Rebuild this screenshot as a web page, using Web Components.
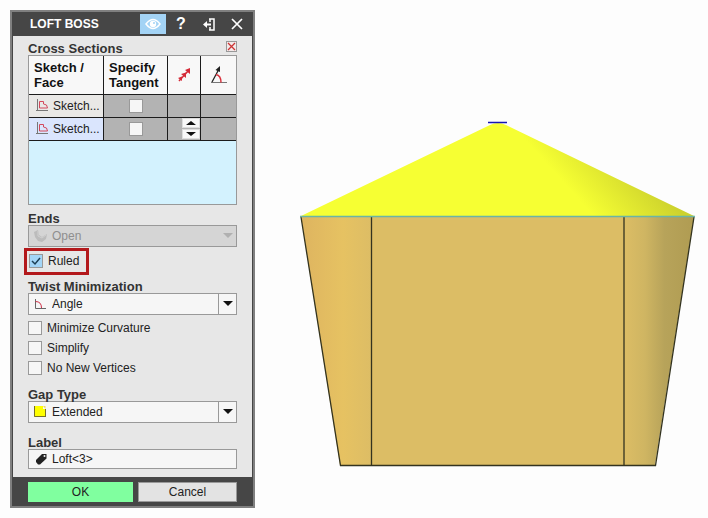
<!DOCTYPE html>
<html lang="en">
<head>
<meta charset="utf-8">
<title>Loft Boss</title>
<style>
body{margin:0;padding:10px;background:#fdfdfd;color:#222;font:12px/16px "Liberation Sans",Arial,sans-serif;display:grid;grid-template-columns:minmax(0,245fr) minmax(0,398fr);gap:45px;align-items:start}
</style>
</head>
<body>
<loft-panel heading="LOFT BOSS">
  <section-table></section-table>
  <select-field class="ends" label="Ends" value="Open" disabled>
    <svg slot="icon" width="16" height="14" viewBox="0 0 16 14"><path d="M1 3l4-2 1 5 3 2 5-3-1 5-4 3-4-1-3-4z" fill="#bcbcbc"/><path d="M5 2v5l4 2 4-3" fill="none" stroke="#d0d0d0"/></svg>
  </select-field>
  <check-field label="Ruled" checked highlight></check-field>
  <select-field class="twist" label="Twist Minimization" value="Angle">
    <svg slot="icon" width="16" height="14" viewBox="0 0 16 14"><path d="M2.500 2v9.500H13" fill="none" stroke="#666"/><path d="M2.500 4.500q6 0 6 6.500" fill="none" stroke="#cf3048"/></svg>
  </select-field>
  <div class="checks">
    <check-field label="Minimize Curvature"></check-field>
    <check-field label="Simplify"></check-field>
    <check-field label="No New Vertices"></check-field>
  </div>
  <select-field class="gap" label="Gap Type" value="Extended">
    <svg slot="icon" width="16" height="14" viewBox="0 0 16 14"><path d="M1 1h9v3h3v8H1z" fill="#ff0"/><path d="M10 1h2.500v3" fill="#f2dc60"/><path d="M1.500 1v10.500H13M12.500 4v8" fill="none" stroke="#77702a"/></svg>
  </select-field>
  <text-field label="Label" value="Loft&lt;3&gt;">
    <svg slot="icon" width="16" height="14" viewBox="0 0 16 14"><path d="M3 8l6-6h4.500v4.500l-6.500 6H5L3 10z" fill="#222"/><circle cx="11.500" cy="4" r="1" fill="#f5f5f5"/></svg>
  </text-field>
  <panel-button slot="actions" kind="ok">OK</panel-button>
  <panel-button slot="actions">Cancel</panel-button>
</loft-panel>
<model-view></model-view>

<script>
const base = `*{box-sizing:border-box}:host{display:block}button,input,select{font:inherit;color:inherit;margin:0}svg{display:block}`;
const define = (name, render) => customElements.define(name, class extends HTMLElement {
  connectedCallback() {
    if (this.shadowRoot) return;
    this.attachShadow({mode: "open"}).innerHTML = render(this);
  }
});
const esc = s => s.replace(/&/g, "&amp;").replace(/</g, "&lt;").replace(/>/g, "&gt;");

define("loft-panel", el => `
<style>${base}
:host{border:2px solid #808080;background:#464646;padding:0 1px}
header{display:flex;align-items:center;height:24px;padding:0 1px 0 17px;color:#fff}
h1{font-size:12px;line-height:16px;margin:0;flex:1}
header button{width:28px;height:20px;padding:0;border:0;background:none;display:grid;place-items:center;font-weight:bold;font-size:16px}
header button.on{background:#a3d3f5;width:26px;margin-right:1px}
.body{background:#e7e7e7;padding:5px 15px 8px}
footer{display:grid;grid-template-columns:105fr 99fr;gap:5px;padding:5px 15px 4px}
::slotted(.ends){margin-top:7px}
::slotted(.twist){margin-top:5px}
::slotted(.checks){display:grid;gap:4px;padding:5px 0 12px}
::slotted(.gap){margin-bottom:13px}
</style>
<header><h1>${el.getAttribute("heading")}</h1>
<button class="on" aria-label="Preview"><svg width="16" height="12" viewBox="0 0 16 12"><path d="M1 6q7-9 14 0-7 9-14 0z" fill="none" stroke="#fff" stroke-width="1.500"/><circle cx="8" cy="6" r="3.200" fill="#fff"/><circle cx="9" cy="5" r="1" fill="#a3d3f5"/></svg></button>
<button aria-label="Help">?</button>
<button aria-label="Dock"><svg width="13" height="13" viewBox="0 0 13 13"><path d="M6 1h5v11H6M7 1v3M7 9v3" fill="none" stroke="#fff" stroke-width="1.500"/><path d="M2 6.500h6" stroke="#fff" stroke-width="2"/><path d="M0 6.500L4 3v7z" fill="#fff"/></svg></button>
<button aria-label="Close"><svg width="12" height="12" viewBox="0 0 12 12"><path d="M1 1l10 10M11 1L1 11" stroke="#fff" stroke-width="1.700"/></svg></button>
</header>
<div class="body"><slot></slot></div>
<footer><slot name="actions"></slot></footer>`);

const sketch = `<svg width="13" height="13" viewBox="0 0 13 13"><path d="M1.500 0v12M0 11.500h12" stroke="#777" fill="none"/><path d="M3.500 9V2.500h4V5q4 0 4 4z" stroke="#d3485c" fill="none"/></svg>`;
const row = (i, extra) => `<tr class="r${i}"><td><span>${sketch}Sketch...</span></td><td><input type="checkbox" aria-label="Specify tangent ${i}"></td><td>${extra}</td><td></td></tr>`;
define("section-table", () => `
<style>${base}
.top{display:flex;justify-content:space-between;align-items:start;height:14px}
h2{font-size:13px;line-height:15px;margin:0;color:#333}
.top button{width:11px;height:11px;padding:0;border:1px solid #999;background:#f3eaea;display:grid;place-items:center}
.box{border:1px solid #999;background:#d3f2fe;padding-bottom:63px}
table{width:100%;border-collapse:collapse;table-layout:fixed}
th,td{padding:0;border-right:1px solid #1c1c1c;border-bottom:1px solid #1c1c1c}
th:last-child,td:last-child{border-right:0}
th{height:38px;background:#f8f8f8;color:#111;font-size:13px;line-height:15px;text-align:left;padding-left:5px}
th.i{padding:0}th svg{margin:auto}
td{height:23px;background:#b3b3b3}
td:first-child{background:#e9e8e6}.r2 td:first-child{background:#dae5fd}
span{display:flex;align-items:center;gap:4px;padding-left:7px;white-space:nowrap}
input{appearance:none;display:block;width:14px;height:14px;margin:auto;border:1px solid #999;background:#f6f6f6}
.spin{display:grid;gap:1px;width:18px;margin-left:auto}
.spin button{height:10px;padding:0;border:1px solid #ddd;background:#f8f8f8;display:grid;place-items:center}
</style>
<div class="top"><h2>Cross Sections</h2><button aria-label="Clear"><svg width="9" height="9" viewBox="0 0 9 9"><path d="M1 1l7 7M8 1L1 8" stroke="#c33" stroke-width="1.300"/></svg></button></div>
<div class="box"><table>
<colgroup><col style="width:36%"><col style="width:31%"><col style="width:16%"><col></colgroup>
<thead><tr><th>Sketch / Face</th><th>Specify Tangent</th>
<th class="i" aria-label="Direction"><svg width="14" height="16" viewBox="0 0 14 16"><path d="M2 14L12 3" stroke="#d52b38" stroke-width="1.500"/><path d="M13 1v6L8 3zM9 5.500v5.500L4 7zM5 9.500V14L1 11z" fill="#d52b38"/></svg></th>
<th class="i" aria-label="Angle"><svg width="18" height="20" viewBox="0 0 18 20"><path d="M1 17.500h16" stroke="#777"/><path d="M2 17L9 4" stroke="#222" stroke-width="1.300"/><path d="M10 1v6L5.500 5z" fill="#222"/><path d="M6 9.500q5 1 5 8" stroke="#d9303c" fill="none" stroke-width="1.500"/></svg></th></tr></thead>
<tbody>${row(1, "")}${row(2, `<div class="spin"><button aria-label="Up"><svg width="10" height="4" viewBox="0 0 10 4"><path d="M0 4l5-4 5 4z" fill="#111"/></svg></button><button aria-label="Down"><svg width="10" height="4" viewBox="0 0 10 4"><path d="M0 0l5 4 5-4z" fill="#111"/></svg></button></div>`)}</tbody></table></div>`);

const field = `
label{display:block;font-weight:bold;font-size:13px;line-height:13px;height:13px;color:#333}
.box{display:grid;grid-template-columns:23px minmax(0,1fr) 18px;align-items:center;border:1px solid #999;background:#f6f6f6}
::slotted(svg),.arrow{grid-row:1;pointer-events:none;z-index:1}
::slotted(svg){display:block;grid-column:1;margin-left:4px}
select,input{grid-area:1/1/2/4;appearance:none;width:100%;padding:0 20px 0 23px;border:0;border-radius:0;background:none;outline:0}`;
define("select-field", el => {
  const off = el.hasAttribute("disabled"), v = esc(el.getAttribute("value"));
  return `
<style>${base}${field}
select{height:20px}
.arrow{grid-column:3;height:20px;border-left:1px solid #999;display:grid;place-items:center;color:#111}
.off{background:#d5d5d5}.off select{color:#8f8f8f;opacity:1}.off .arrow{border-color:transparent;color:#b0b0b0}
</style>
<label for="s">${el.getAttribute("label")}</label>
<div class="box ${off ? "off" : ""}"><slot name="icon"></slot><select id="s" ${off ? "disabled" : ""}><option>${v}</option></select>
<div class="arrow"><svg width="10" height="5" viewBox="0 0 10 5"><path d="M0 0h10L5 5z" fill="currentColor"/></svg></div></div>`;
});
define("text-field", el => `
<style>${base}${field}input{height:18px}</style>
<label for="t">${el.getAttribute("label")}</label>
<div class="box"><slot name="icon"></slot><input id="t" type="text" value="${esc(el.getAttribute("value"))}"></div>`);
define("check-field", el => `
<style>${base}
label{display:flex;align-items:center;gap:5px;line-height:16px}
:host([highlight]) label{width:max-content;border:3px solid #b3191c;margin:1px 0 0 -4px;padding:2px 7px 2px 2px;line-height:17px}
input{appearance:none;display:block;width:14px;height:14px;border:1px solid #999;background:#f6f6f6}
.wrap{display:grid}.wrap>*{grid-area:1/1}
.wrap svg{display:none;pointer-events:none}
input:checked{background:#a3d5f7}input:checked+svg{display:block}
</style>
<label><span class="wrap"><input type="checkbox" ${el.hasAttribute("checked") ? "checked" : ""}><svg width="14" height="14" viewBox="0 0 14 14"><path d="M3 7l3 3 5-6" fill="none" stroke="#1d3f55" stroke-width="1.500"/></svg></span>${el.getAttribute("label")}</label>`);
define("panel-button", el => `
<style>${base}
button{display:block;width:100%;height:20px;padding:0;border:1px solid #999;background:#e3e3e3}
:host([kind=ok]) button{background:#80ff9f;border-color:#80ff9f}
</style><button><slot></slot></button>`);
define("model-view", () => `
<style>${base}svg{width:100%;height:auto}</style>
<svg viewBox="300 10 398 498" role="img" aria-label="Lofted solid">
<defs>
<linearGradient id="l"><stop offset="0" stop-color="#deb460"/><stop offset=".6" stop-color="#e6c262"/><stop offset="1" stop-color="#ddbd65"/></linearGradient>
<linearGradient id="r"><stop offset="0" stop-color="#dcbd65"/><stop offset=".3" stop-color="#cfb562"/><stop offset=".58" stop-color="#b7a35a"/><stop offset="1" stop-color="#b09c52"/></linearGradient>
<linearGradient id="y" gradientUnits="userSpaceOnUse" x1="575" y1="195" x2="625" y2="150"><stop offset="0" stop-color="#f6ff33"/><stop offset="1" stop-color="#cdd22d"/></linearGradient>
</defs>
<path d="M301 216L490 125q8-4 16 0L694 216z" fill="url(#y)"/>
<path d="M371 217h253v248H371z" fill="#dcbd65"/>
<path d="M301 217h70v248h-31z" fill="url(#l)"/>
<path d="M624 217h70l-39 248h-31z" fill="url(#r)"/>
<path d="M301 217l39.500 248.500h315L694 217M371.500 217v248M624 217v248" fill="none" stroke="#33331f" stroke-width="1.300"/>
<path d="M300 216.500h395" stroke="#6ab5a5" stroke-width="1.500"/>
<path d="M488 122.500h19" stroke="#1515b5" stroke-width="1.500"/>
</svg>`);
</script>
</body>
</html>
